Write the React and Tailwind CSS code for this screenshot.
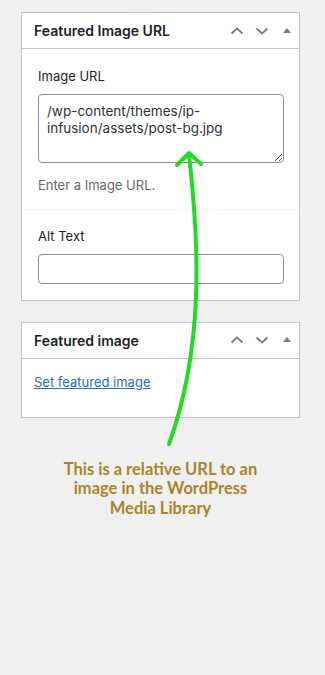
import React from "react";

const font = { fontFamily: "Inter, 'Noto Sans', sans-serif" };

const HeaderIcons = () => (
  <div className="flex items-center gap-[9px] text-[#787c82]">
    <svg width="16" height="16" viewBox="0 0 16 16" fill="none" stroke="currentColor" strokeWidth="1.8">
      <path d="M2.5 10.5 L8 5.5 L13.5 10.5" />
    </svg>
    <svg width="16" height="16" viewBox="0 0 16 16" fill="none" stroke="currentColor" strokeWidth="1.8">
      <path d="M2.5 5.5 L8 10.5 L13.5 5.5" />
    </svg>
    <svg width="16" height="16" viewBox="0 0 16 16" fill="currentColor">
      <path d="M4 10 L8 5 L12 10 Z" />
    </svg>
  </div>
);

const Panel = ({ title, children }) => (
  <div className="w-[279px] border border-[#c3c4c7] bg-white">
    <div className="flex h-[36px] items-center justify-between border-b border-[#c3c4c7] pl-[12px] pr-[4px]">
      <h2 className="text-[14px] font-semibold text-[#1d2327]">{title}</h2>
      <HeaderIcons />
    </div>
    {children}
  </div>
);

export default function App() {
  return (
    <div className="relative min-h-[675px] w-full bg-[#f0f0f1] pt-[12px] pl-[21px]" style={font}>
      <Panel title="Featured Image URL">
        <div className="px-[16px] pt-[18px] pb-[14px]">
          <label className="block text-[13px] text-[#1d2327]">Image URL</label>
          <textarea
            readOnly
            className="mt-[7px] block h-[69px] w-[246px] rounded-[4px] border border-[#8c8f94] px-[8px] pt-[8px] text-[13.5px] leading-[17px] text-[#2c3338] outline-none"
            style={font}
            defaultValue="/wp-content/themes/ip-infusion/assets/post-bg.jpg"
          />
          <p className="mt-[13px] text-[13px] text-[#646970]">Enter a Image URL.</p>
        </div>
        <div className="border-t border-[#f0f0f1] px-[16px] pt-[17px] pb-[16px]">
          <label className="block text-[13px] text-[#1d2327]">Alt Text</label>
          <input
            readOnly
            className="mt-[7px] block h-[30px] w-[246px] rounded-[4px] border border-[#8c8f94] px-[8px] outline-none"
          />
        </div>
      </Panel>

      <div className="h-[21px]" />

      <Panel title="Featured image">
        <div className="h-[58px] px-[12px] pt-[10px]">
          <a href="#" className="text-[13px] text-[#2271b1] underline">
            Set featured image
          </a>
        </div>
      </Panel>

      <p
        className="mt-[42px] w-[279px] text-center text-[16.5px] font-bold leading-[19.5px] text-[#ad832a]"
        style={{ fontFamily: "Lato, 'Noto Sans', sans-serif" }}
      >
        This is a relative URL to an
        <br />
        image in the WordPress
        <br />
        Media Library
      </p>

      <svg
        className="pointer-events-none absolute left-0 top-0"
        width="325"
        height="675"
        viewBox="0 0 325 675"
        fill="none"
        stroke="#22dc22"
        strokeWidth="4"
        strokeLinecap="round"
        strokeLinejoin="round"
      >
        <path d="M189 155 C 200 250, 203 350, 169 444" />
        <path d="M177 165 L189 153 L201 164" />
      </svg>
    </div>
  );
}
